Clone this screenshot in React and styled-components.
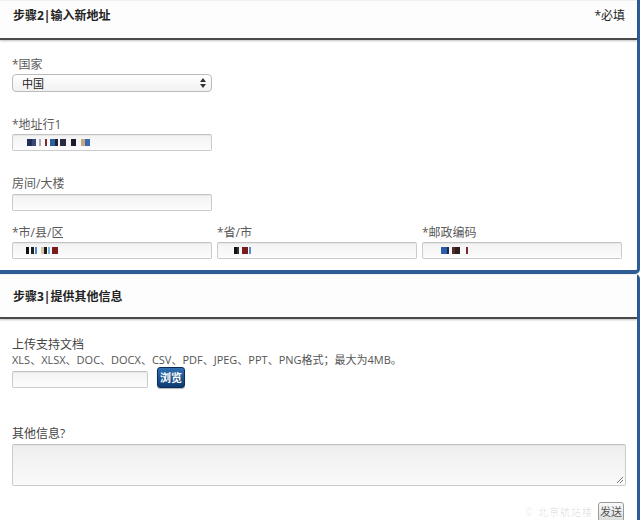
import React from 'react';
import styled, { createGlobalStyle } from 'styled-components';

const GlobalStyle = createGlobalStyle`
  html, body { margin: 0; padding: 0; background: #fff; }
  body {
    font-family: "Open Sans", "Noto Sans CJK SC", sans-serif;
    font-size: 12px;
    color: #555;
  }
`;

const Page = styled.div`
  position: relative;
  width: 641px;
  height: 520px;
  overflow: hidden;
  background: #fff;
`;

const Panel = styled.section`
  width: 640px;
  box-sizing: border-box;
  border-right: 3px solid #2c5e95;
  border-bottom: ${p => (p.$last ? 'none' : '4px solid #2c5e95')};
  border-bottom-right-radius: ${p => (p.$last ? '0' : '5px')};
  border-top-right-radius: ${p => (p.$last ? '5px' : '0')};
  min-height: ${p => (p.$last ? '246px' : '0')};
`;

const PanelHeader = styled.header`
  height: ${p => p.$h}px;
  box-sizing: border-box;
  display: flex;
  align-items: center;
  justify-content: space-between;
  padding: ${p => p.$pt || 0}px 12px ${p => p.$pb || 0}px 13px;
  background: #fdfdfd;
  border-top: 1px solid #f0f0f0;
  border-bottom: 2px solid #4a4a4a;
  box-shadow: 0 1px 2px rgba(0, 0, 0, 0.25);
  color: #222;
  font-weight: 700;
  font-size: 12px;
  line-height: 16px;
`;

const Required = styled.span`
  font-weight: 400;
  color: #222;
`;

const Body = styled.div`
  padding: ${p => p.$pad};
`;

const Group = styled.div`
  margin-top: ${p => p.$mt || 0}px;
`;

const Label = styled.label`
  display: block;
  line-height: ${p => p.$lh || 16}px;
  color: ${p => (p.$dark ? '#444' : '#5a5a5a')};
  font-size: 12px;
`;

const Hint = styled.div`
  margin-top: 1px;
  line-height: 14px;
  color: #555;
  font-size: 11px;
`;

const Select = styled.div`
  margin-top: 1px;
  width: 200px;
  height: 18px;
  box-sizing: border-box;
  display: flex;
  align-items: center;
  justify-content: space-between;
  padding: 0 5px 0 9px;
  border: 1px solid #bbb;
  border-radius: 4px;
  background: linear-gradient(#fff, #f1f1f1);
  color: #222;
  font-size: 11px;
`;

const Field = styled.div`
  margin-top: ${p => (p.$mt === undefined ? 1 : p.$mt)}px;
  width: ${p => p.$w || 200}px;
  height: ${p => p.$h || 17}px;
  box-sizing: border-box;
  display: flex;
  align-items: center;
  padding-left: 8px;
  border: 1px solid #ccc;
  border-top-color: #c2c2c2;
  border-radius: 2px;
  background: linear-gradient(#f3f3f3, #fcfcfc);
  box-shadow: inset 0 1px 1px rgba(0, 0, 0, 0.05);
`;

const Area = styled(Field)`
  position: relative;
  align-items: flex-start;
  background: linear-gradient(#eeeeee, #fafafa);
`;

const Grip = styled.svg`
  position: absolute;
  right: 2px;
  bottom: 2px;
`;

const Mosaic = styled.div`
  display: flex;
  align-items: center;
  height: 8px;
`;

const Block = styled.span`
  display: inline-block;
  width: ${p => p.$w}px;
  height: ${p => p.$h || 7}px;
  margin-left: ${p => p.$ml || 0}px;
  background: ${p => p.$c};
`;

const Row3 = styled.div`
  display: grid;
  grid-template-columns: repeat(3, 200px);
  column-gap: 5px;
  margin-top: 14px;
`;

const FileRow = styled.div`
  display: flex;
  align-items: flex-end;
  gap: 9px;
`;

const BrowseButton = styled.button`
  height: 21px;
  padding: 0 2px;
  border: 1px solid #0b2d57;
  border-radius: 3px;
  background: linear-gradient(#2f6fb2, #0e3b70);
  color: #fff;
  font-family: inherit;
  font-weight: 700;
  font-size: 11px;
  line-height: 19px;
  box-shadow: 0 1px 1px rgba(0, 0, 0, 0.3);
`;

const Actions = styled.div`
  display: flex;
  justify-content: flex-end;
  padding-right: 13px;
  margin-top: 16px;
`;

const SendButton = styled.button`
  height: 20px;
  padding: 0 1px;
  border: 1px solid #999;
  border-radius: 3px;
  background: linear-gradient(#fafafa, #dcdcdc);
  color: #555;
  font-family: inherit;
  font-size: 11px;
  line-height: 18px;
`;

const Watermark = styled.span`
  position: absolute;
  right: 48px;
  bottom: 1px;
  color: rgba(0, 0, 0, 0.13);
  font-size: 10px;
  letter-spacing: 1px;
`;

const Arrows = () => (
  <svg width="6" height="10" viewBox="0 0 6 10">
    <path d="M3 0 L6 4 H0 Z" fill="#333" />
    <path d="M3 10 L6 6 H0 Z" fill="#333" />
  </svg>
);

const Pixels = ({ items }) => (
  <Mosaic>
    {items.map(([w, c, ml], i) => (
      <Block key={i} $w={w} $c={c} $ml={ml} />
    ))}
  </Mosaic>
);

const address1 = [
  [5, '#1f2f55', 6], [4, '#3a4a78'], [2, '#aab', 3], [2, '#7a2a2a', 4],
  [5, '#2d5fa0', 3], [3, '#223'], [6, '#2a2a40', 2], [5, '#1c1c2c', 5],
  [4, '#c8a880', 5], [5, '#3a6ab0'],
];
const city = [
  [3, '#111', 5], [3, '#222', 2], [2, '#4a8ad0', 1], [3, '#d8c8a8', 4],
  [3, '#1a1a1a'], [2, '#7ab0e0', 1], [6, '#7a1c1c', 2],
];
const province = [
  [3, '#111', 8], [2, '#333'], [6, '#7a1c1c', 3], [2, '#5a8ad0', 1],
];
const postal = [
  [6, '#2c5ea8', 10], [2, '#1a2a50'], [3, '#5a2a2a', 3], [5, '#2a2020'],
  [2, '#7a2a2a', 6],
];

export default function App() {
  return (
    <Page>
      <GlobalStyle />
      <Panel>
        <PanelHeader $h={40} $pb={7}>
          <span>步骤2|输入新地址</span>
          <Required>*必填</Required>
        </PanelHeader>
        <Body $pad="17px 15px 11px 12px">
          <Group>
            <Label>*国家</Label>
            <Select>
              <span>中国</span>
              <Arrows />
            </Select>
          </Group>
          <Group $mt={25}>
            <Label>*地址行1</Label>
            <Field>
              <Pixels items={address1} />
            </Field>
          </Group>
          <Group $mt={25}>
            <Label>房间/大楼</Label>
            <Field $mt={2} />
          </Group>
          <Row3>
            <Group>
              <Label>*市/县/区</Label>
              <Field>
                <Pixels items={city} />
              </Field>
            </Group>
            <Group>
              <Label>*省/市</Label>
              <Field>
                <Pixels items={province} />
              </Field>
            </Group>
            <Group>
              <Label>*邮政编码</Label>
              <Field>
                <Pixels items={postal} />
              </Field>
            </Group>
          </Row3>
        </Body>
      </Panel>

      <Panel $last>
        <PanelHeader $h={45} $pt={2}>
          <span>步骤3|提供其他信息</span>
        </PanelHeader>
        <Body $pad="18px 0 0 12px">
          <Group>
            <Label $lh={15} $dark>上传支持文档</Label>
            <Hint>XLS、XLSX、DOC、DOCX、CSV、PDF、JPEG、PPT、PNG格式；最大为4MB。</Hint>
            <FileRow>
              <Field $w={136} $mt={0} />
              <BrowseButton type="button">浏览</BrowseButton>
            </FileRow>
          </Group>
          <Group $mt={38}>
            <Label $dark>其他信息?</Label>
            <Area $w={614} $h={42} $mt={2}>
              <Grip width="7" height="7" viewBox="0 0 7 7">
                <path d="M1 7 L7 1 M4 7 L7 4" stroke="#777" strokeWidth="1" />
              </Grip>
            </Area>
          </Group>
          <Actions>
            <SendButton type="button">发送</SendButton>
          </Actions>
        </Body>
      </Panel>
      <Watermark>© 北京航站楼</Watermark>
    </Page>
  );
}
